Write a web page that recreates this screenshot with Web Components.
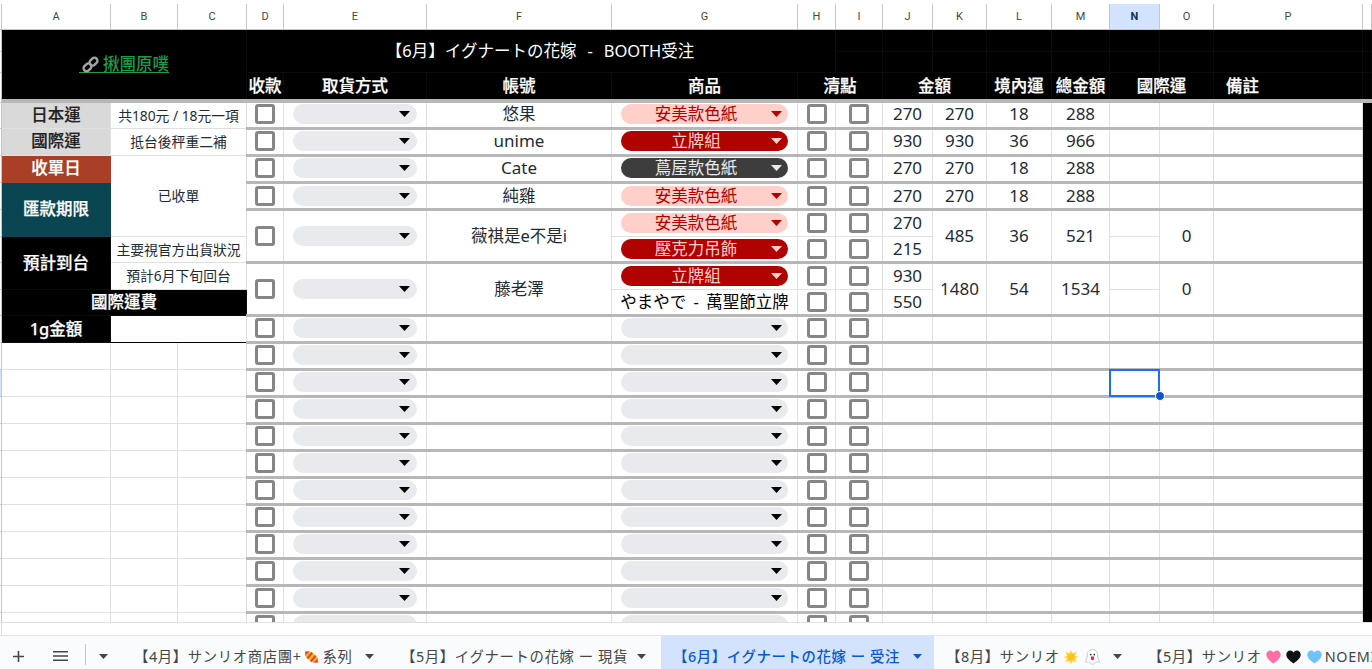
<!DOCTYPE html>
<html lang="zh-Hant">
<head>
<meta charset="utf-8">
<title>試算表</title>
<style>
  html, body { margin: 0; height: 100%; overflow: hidden; background: #fff; }
  body { font-family: "Noto Sans", "Noto Sans CJK TC", sans-serif; }
</style>
</head>
<body>
<sheet-app></sheet-app>

<script>
const CJK = `"Noto Sans", "Noto Sans CJK TC", sans-serif`;
const ARROW = (w, h, c) => `<svg width="${w}" height="${h}" viewBox="0 0 ${w} ${h}"><path d="M0 0H${w}L${w / 2} ${h}Z" fill="${c}"/></svg>`;

class SheetCell extends HTMLElement {
  constructor() {
    super();
    this.attachShadow({ mode: 'open' });
    this.shadowRoot.innerHTML = `
      <style>
        :host {
          display: flex;
          align-items: center;
          justify-content: center;
          box-sizing: border-box;
          min-width: 0;
          overflow: hidden;
          white-space: nowrap;
          border-right: 1px solid #e0e0e0;
          border-bottom: 1px solid #e0e0e0;
          background: #fff;
          color: #1d2b36;
          font: 16.5px/20px ${CJK};
        }
        :host([pad]) { padding-bottom: 3px; }
        :host([pad2]) { padding: 1px 0 2px; }
        :host([num]) { font-size: 17px; }
        :host([small]) { font-size: 13.8px; }
        :host([kana]) { color: #000; word-spacing: 3px; }
        :host([black]) { background: #000; color: #fff; border-color: #0c0c0c; font-weight: 500; -webkit-text-stroke: .25px currentColor; }
        :host([grey]) { background: #d9d9d9; color: #222; font-weight: 500; border-color: #e0e0e0; -webkit-text-stroke: .2px currentColor; }
        :host([red]) { background: #a83f26; color: #fff; font-weight: 500; border-color: #a83f26; -webkit-text-stroke: .25px currentColor; }
        :host([teal]) { background: #0a4652; color: #fff; font-weight: 500; border-color: #0a4652; -webkit-text-stroke: .25px currentColor; }
        :host([head]) { background: #fff; color: #444746; font: 11px/14px Roboto, sans-serif; border-color: #c4c7c5; }
        :host([on]) { background: #d3e3fd; color: #0b2f66; font-weight: 700; }
        :host([plain]) { font-weight: 400; -webkit-text-stroke: 0; }
        :host([inkline]) { border-bottom-color: #000; }
        :host([lift]) { padding-bottom: 2px; }
        :host([lift1]) { padding-bottom: 1px; }
        :host([title]) { padding-bottom: 4px; }
        :host([wide]) { padding-right: 2px; word-spacing: 1.2px; }
      </style>
      <slot></slot>`;
  }
}

class SheetCheck extends HTMLElement {
  constructor() {
    super();
    this.attachShadow({ mode: 'open' });
    this.shadowRoot.innerHTML = `
      <style>
        :host {
          display: block;
          box-sizing: border-box;
          width: 20px;
          height: 20px;
          border: 3px solid #868686;
          border-radius: 3px;
          background: #fff;
        }
      </style>`;
  }
}

class SheetChip extends HTMLElement {
  constructor() {
    super();
    this.attachShadow({ mode: 'open' });
  }
  connectedCallback() {
    const tone = this.getAttribute('tone') || 'none';
    const arrow = { none: '#000', pink: '#b10202', red: '#ffcfc9', dark: '#e8eaed' }[tone];
    this.shadowRoot.innerHTML = `
      <style>
        :host {
          display: flex;
          align-items: center;
          box-sizing: border-box;
          width: 167px;
          height: 20px;
          padding-right: 6px;
          border-radius: 10px;
          background: #e8eaed;
          font: 16.5px/20px ${CJK};
        }
        :host([short]) { width: 124px; padding-right: 7px; }
        :host([tone=pink]) { background: #ffcfc9; color: #b10202; }
        :host([tone=red]) { background: #b10202; color: #ffcfc9; }
        :host([tone=dark]) { background: #3d3d3d; color: #e8eaed; }
        .label { flex: 1; text-align: center; }
        svg { flex: none; display: block; }
      </style>
      <span class="label"><slot></slot></span>
      ${ARROW(11, 6, arrow)}`;
  }
}

class SheetLink extends HTMLElement {
  constructor() {
    super();
    this.attachShadow({ mode: 'open' });
    this.shadowRoot.innerHTML = `
      <style>
        :host {
          display: inline-flex;
          align-items: center;
          gap: 4px;
          height: 17px;
          padding-left: 3px;
          border-bottom: 1px solid #1e9a4b;
          color: #1e9a4b;
          font: 500 16.5px/17px ${CJK};
        }
        svg { display: block; margin-top: 1px; }
      </style>
      <svg width="17" height="17" viewBox="0 0 17 17" fill="none" stroke="#a4a4a4" stroke-width="2.4">
        <rect x="1.2" y="8.4" width="8.6" height="6" rx="3" transform="rotate(-45 5.5 11.4)"/>
        <rect x="7.2" y="2.6" width="8.6" height="6" rx="3" transform="rotate(-45 11.5 5.6)"/>
      </svg>
      <slot></slot>`;
  }
}

class SheetGrid extends HTMLElement {
  constructor() {
    super();
    this.attachShadow({ mode: 'open' });
  }

  connectedCallback() {
    this.render();
  }

  area(col, colEnd, row, rowEnd) {
    return `grid-area:${row}/${col}/${rowEnd}/${colEnd}`;
  }

  // una celda simple; col y fila son líneas del grid
  cell(col, row, attrs = '', inner = '', colSpan = 1, rowSpan = 1) {
    return `<sheet-cell ${attrs} style="${this.area(col, col + colSpan, row, row + rowSpan)}">${inner}</sheet-cell>`;
  }

  // filas de datos desde la línea 5
  dataRow(row, data) {
    const pad = row >= 8 && row <= 12 ? 'pad2' : 'pad';
    const items = data ? data.items : [[null, null, null]];
    const span = items.length;
    const base = span > 1 ? '' : pad;
    const latin = data && /^[a-z]+$/i.test(data.name) ? 'num' : '';
    let out = '';
    out += this.cell(5, row, base, '<sheet-check></sheet-check>', 1, span);
    out += this.cell(6, row, base, '<sheet-chip short></sheet-chip>', 1, span);
    out += this.cell(7, row, `${base} ${latin}`, data ? data.name : '', 1, span);
    items.forEach((it, i) => {
      const r = row + i;
      if (it[0] === 'kana') {
        out += this.cell(8, r, `${pad} kana`, it[1]);
      } else {
        const tone = it[0] ? `tone="${it[0]}"` : '';
        out += this.cell(8, r, pad, `<sheet-chip ${tone}>${it[1] || ''}</sheet-chip>`);
      }
      out += this.cell(9, r, pad, '<sheet-check></sheet-check>');
      out += this.cell(10, r, pad, '<sheet-check></sheet-check>');
      out += this.cell(11, r, `${pad} num`, it[2] === null ? '' : it[2]);
      out += this.cell(15, r, pad);
    });
    out += this.cell(12, row, `${base} num`, data ? data.k : '', 1, span);
    out += this.cell(13, row, `${base} num`, data ? data.l : '', 1, span);
    out += this.cell(14, row, `${base} num`, data ? data.m : '', 1, span);
    out += this.cell(16, row, `${base} num`, data && data.o !== undefined ? data.o : '', 1, span);
    out += this.cell(17, row, base, '', 1, span);
    const last = row + span - 1;
    out += `<div class="rule" style="grid-row:${last};grid-column:5/18"></div>`;
    return out;
  }

  render() {
    const widths = [2, 109, 67, 69, 37, 143, 185, 186, 38, 47, 50, 54, 65, 58, 50, 54, 149, 9];
    const heights = [26, 22, 21, 30, 26, 27, 27, 27, 27, 26, 27, 26, 27];
    for (let i = 0; i < 12; i++) heights.push(27);

    let html = '';

    // cabecera de columnas
    html += this.cell(1, 1, 'head');
    'ABCDEFGHIJKLMNOPQ'.split('').forEach((letter, i) => {
      const on = letter === 'N' ? 'on' : '';
      html += this.cell(i + 2, 1, `head ${on}`, letter === 'Q' ? '' : letter);
    });

    // canaleta izquierda (números de fila)
    heights.forEach((h, i) => {
      if (i === 0) return;
      const on = i + 1 === 15 ? 'on' : '';
      html += this.cell(1, i + 1, `head ${on}`);
    });

    // banda negra de arriba
    html += this.cell(2, 2, 'black plain title', '<sheet-link>揪團原噗</sheet-link>', 3, 3);
    html += this.cell(5, 2, 'black plain wide', '【6月】イグナートの花嫁 &nbsp;-&nbsp; BOOTH受注', 5, 2);
    for (let c = 10; c <= 18; c++) {
      html += this.cell(c, 2, 'black');
      html += this.cell(c, 3, 'black');
    }
    const titles = [[5, 1, '收款'], [6, 1, '取貨方式'], [7, 1, '帳號'], [8, 1, '商品'], [9, 2, '清點'], [11, 2, '金額'], [13, 1, '境內運'], [14, 1, '總金額'], [15, 2, '國際運']];
    titles.forEach(([c, s, t]) => {
      html += this.cell(c, 4, 'black title', t, s);
    });
    html += `<sheet-cell black title style="${this.area(17, 18, 4, 5)};justify-content:flex-start;padding-left:12px">備註</sheet-cell>`;
    html += this.cell(18, 4, 'black');
    html += `<div class="rule head-rule" style="grid-row:4;grid-column:2/19"></div>`;

    // bloque izquierdo A-C
    html += this.cell(2, 5, 'grey lift', '日本運');
    html += this.cell(3, 5, 'small', '共180元 / 18元一項', 2);
    html += this.cell(2, 6, 'grey lift', '國際運');
    html += this.cell(3, 6, 'small', '抵台後秤重二補', 2);
    html += this.cell(2, 7, 'red lift', '收單日');
    html += this.cell(3, 7, 'small', '已收單', 2, 3);
    html += this.cell(2, 8, 'teal lift1', '匯款期限', 1, 2);
    html += this.cell(2, 10, 'black lift1', '預計到台', 1, 2);
    html += this.cell(3, 10, 'small', '主要視官方出貨狀況', 2);
    html += this.cell(3, 11, 'small', '預計6月下旬回台', 2);
    html += this.cell(2, 12, 'black lift', '國際運費', 3);
    html += this.cell(2, 13, 'black', '1g金額');
    html += this.cell(3, 13, 'inkline', '', 2);
    for (let r = 14; r <= 25; r++) {
      html += this.cell(2, r) + this.cell(3, r) + this.cell(4, r);
    }

    // filas con pedidos
    const orders = [
      [5, { name: '悠果', k: 270, l: 18, m: 288, items: [['pink', '安美款色紙', 270]] }],
      [6, { name: 'unime', k: 930, l: 36, m: 966, items: [['red', '立牌組', 930]] }],
      [7, { name: 'Cate', k: 270, l: 18, m: 288, items: [['dark', '蔦屋款色紙', 270]] }],
      [8, { name: '純雞', k: 270, l: 18, m: 288, items: [['pink', '安美款色紙', 270]] }],
      [9, { name: '薇祺是e不是i', k: 485, l: 36, m: 521, o: 0, items: [['pink', '安美款色紙', 270], ['red', '壓克力吊飾', 215]] }],
      [11, { name: '藤老澤', k: 1480, l: 54, m: 1534, o: 0, items: [['red', '立牌組', 930], ['kana', 'やまやで - 萬聖節立牌', 550]] }],
    ];
    orders.forEach(([r, d]) => { html += this.dataRow(r, d); });
    for (let r = 13; r <= 25; r++) html += this.dataRow(r, null);

    // franja negra de la derecha
    html += `<div class="strip" style="grid-column:18;grid-row:5/26"></div>`;

    // celda seleccionada
    html += `<div class="pick" style="grid-column:15;grid-row:15"><i></i></div>`;

    this.shadowRoot.innerHTML = `
      <style>
        :host {
          display: block;
          flex: none;
          height: 623px;
          box-sizing: border-box;
          padding-top: 4px;
          overflow: hidden;
          border-bottom: 1px solid #e0e0e0;
        }
        .grid {
          display: grid;
          grid-template-columns: ${widths.map(w => w + 'px').join(' ')};
          grid-template-rows: ${heights.map(h => h + 'px').join(' ')};
        }
        .rule {
          z-index: 2;
          align-self: end;
          height: 3px;
          margin: 0 0 -1px -1px;
          background: #b7b7b7;
        }
        .head-rule { height: 4px; margin: 0; }
        .strip { background: #000; z-index: 3; }
        .pick {
          position: relative;
          z-index: 4;
          margin: -1px 0 0 -1px;
          border: 2px solid #1a73e8;
        }
        .pick i {
          position: absolute;
          right: -7px;
          bottom: -6px;
          width: 8px;
          height: 8px;
          border-radius: 50%;
          background: #0b57d0;
          border: 1px solid #fff;
        }
      </style>
      <div class="grid">${html}</div>`;
  }
}

class SheetTab extends HTMLElement {
  constructor() {
    super();
    this.attachShadow({ mode: 'open' });
  }
  connectedCallback() {
    const active = this.hasAttribute('active');
    this.shadowRoot.innerHTML = `
      <style>
        :host {
          display: flex;
          flex: none;
          align-items: center;
          box-sizing: border-box;
          height: 33px;
          padding: 8px 12px 0 12px;
          color: #444746;
          font: 14.4px/20px ${CJK};
          letter-spacing: .6px;
          white-space: nowrap;
        }
        :host([active]) { background: #d3e3fd; color: #0b57d0; font-weight: 500; }
        .name { display: flex; align-items: center; }
        svg.arrow { margin-left: auto; flex: none; }
      </style>
      <span class="name"><slot></slot></span>
      <svg class="arrow" width="9" height="5" viewBox="0 0 9 5"><path d="M0 0H9L4.5 5Z" fill="${active ? '#0b57d0' : '#444746'}"/></svg>`;
  }
}

class SheetTabs extends HTMLElement {
  constructor() {
    super();
    this.attachShadow({ mode: 'open' });
    this.shadowRoot.innerHTML = `
      <style>
        :host {
          display: flex;
          flex: none;
          align-items: flex-start;
          height: 33px;
          overflow: hidden;
          background: #f9fbfd;
        }
        .tools { display: flex; align-items: center; flex: none; width: 122px; height: 33px; box-sizing: border-box; padding: 7px 0 0 13px; }
        .div { width: 1px; height: 21px; margin: -4px 13px 0 17px; background: #c7c7c7; }
        svg { display: block; flex: none; }
      </style>
      <div class="tools">
        <svg width="11" height="11" viewBox="0 0 11 11"><path d="M5.5 0V11M0 5.5H11" stroke="#444746" stroke-width="1.6"/></svg>
        <svg style="margin-left:29px" width="15" height="10" viewBox="0 0 15 10"><path d="M0 .8H15M0 5H15M0 9.2H15" stroke="#444746" stroke-width="1.4"/></svg>
        <div class="div"></div>
        <svg width="9" height="5" viewBox="0 0 9 5"><path d="M0 0H9L4.5 5Z" fill="#444746"/></svg>
      </div>
      <slot></slot>`;
  }
}

class SheetApp extends HTMLElement {
  constructor() {
    super();
    this.attachShadow({ mode: 'open' });
    const candy = `<svg style="margin:0 3px 0 1px" width="17" height="16" viewBox="0 0 17 16"><g transform="rotate(40 8.5 8)"><path d="M0 8 3.6 4.6V11.4ZM17 8 13.4 4.6V11.4Z" fill="#e8402f"/><rect x="3" y="4" width="11" height="8" rx="3.6" fill="#fbb826"/><path d="M5.2 4.2H7.2V11.8H5.2ZM9.8 4.2H11.8V11.8H9.8Z" fill="#e8402f"/></g></svg>`;
    const star = `<svg style="margin:0 7px 0 4px" width="14" height="14" viewBox="0 0 14 14"><path d="M7 0 8.6 3.2 12.5 1.8 11 5.6 14 7 11 8.6 12.5 12.2 8.6 11 7 14 5.4 11 1.5 12.2 3 8.6 0 7 3 5.6 1.5 1.8 5.4 3.2Z" fill="#ffd43b"/><circle cx="7" cy="7" r="3.4" fill="#ffc21f"/></svg>`;
    const ghost = `<svg style="margin-right:1px" width="15" height="16" viewBox="0 0 15 16"><path d="M7.5.6C3.6.6 2.2 3.6 2.2 7c0 2.4-1.2 4-1.6 6 1.4.6 2.6-.4 3.4-.2.8.8 1.6 2.4 3.5 2.4s2.7-1.6 3.5-2.4c.8-.2 2 .8 3.4.2-.4-2-1.6-3.6-1.6-6 0-3.4-1.4-6.4-5.3-6.4Z" fill="#fff" stroke="#c9c9c9"/><circle cx="5.7" cy="5.6" r=".9" fill="#333"/><circle cx="9.3" cy="5.6" r=".9" fill="#333"/><path d="M5.9 7.6H9.1V9.6A1.6 1.6 0 0 1 5.9 9.6Z" fill="#e6197d"/></svg>`;
    const heart = (c, m) => `<svg style="margin:${m}" width="15" height="14" viewBox="0 0 15 14"><path d="M7.5 13.6C3 10.4.3 7.8.3 4.6.3 2.2 2.1.4 4.2.4 5.6.4 6.8 1.2 7.5 2.4 8.2 1.2 9.4.4 10.8.4c2.1 0 3.9 1.8 3.9 4.2 0 3.2-2.7 5.8-7.2 9Z" fill="${c}"/></svg>`;
    this.shadowRoot.innerHTML = `
      <style>
        :host { display: flex; flex-direction: column; height: 669px; overflow: hidden; background: #fff; }
        .scroll { flex: none; height: 12px; box-sizing: border-box; margin-left: 1px; border-left: 1px solid #e0e0e0; }
        .line { flex: none; height: 1px; background: #e0e3e7; }
      </style>
      <sheet-grid></sheet-grid>
      <div class="scroll"></div>
      <div class="line"></div>
      <sheet-tabs>
        <sheet-tab style="width:267px;padding-right:15px">【4月】サンリオ商店團+${candy}系列</sheet-tab>
        <sheet-tab style="width:272px;padding-right:15px">【5月】イグナートの花嫁 ー 現貨</sheet-tab>
        <sheet-tab style="width:273px" active>【6月】イグナートの花嫁 ー 受注</sheet-tab>
        <sheet-tab style="width:202px;padding-right:14px">【8月】サンリオ${star}${ghost}</sheet-tab>
        <sheet-tab>【5月】サンリオ${heart('#ff6fa5', '0 5px 0 4px')}${heart('#111', '0 6px 0 0')}${heart('#6cc4fb', '0 3px 0 0')}NOEMI</sheet-tab>
      </sheet-tabs>`;
  }
}

customElements.define('sheet-cell', SheetCell);
customElements.define('sheet-check', SheetCheck);
customElements.define('sheet-chip', SheetChip);
customElements.define('sheet-link', SheetLink);
customElements.define('sheet-grid', SheetGrid);
customElements.define('sheet-tab', SheetTab);
customElements.define('sheet-tabs', SheetTabs);
customElements.define('sheet-app', SheetApp);
</script>
</body>
</html>
